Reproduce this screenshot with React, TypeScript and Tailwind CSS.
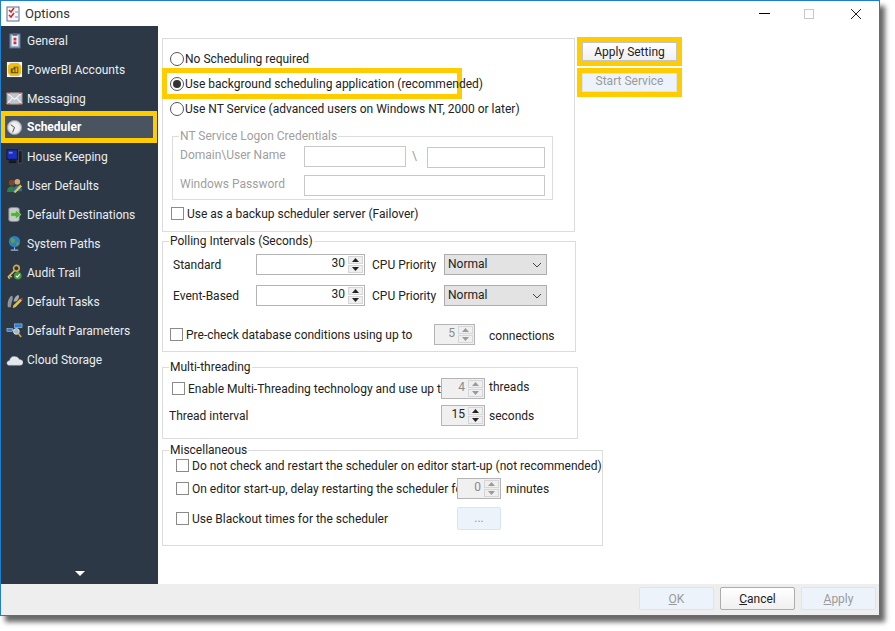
import type { ReactNode } from "react";

const icons: Record<string, ReactNode> = {
  General: (
    <>
      <rect x="4" y="2" width="11" height="15" fill="#8fa6c4" stroke="#4c6488" />
      <rect x="6" y="3" width="7" height="12" fill="#e8edf4" />
      <rect x="7" y="1" width="5" height="3" fill="#55657a" />
      <path d="M8 6h3v3H8zM8 10h3v3H8z" fill="#c8333a" />
    </>
  ),
  PowerBI: (
    <>
      <rect x="1" y="1" width="16" height="16" fill="#f4f4f4" />
      <path d="M5 2h8l3 3v8l-3 3H5l-3-3V5z" fill="#eebc12" />
      <path d="M5 8h3V6h5v7H5z" fill="#5f4d0a" />
      <path d="M7 9h2v3H7zM10 7h2v5h-2z" fill="#e2b414" />
    </>
  ),
  Messaging: (
    <>
      <path d="M1 3l16 0v12H1z" fill="#c2c6cc" stroke="#8d8f93" />
      <path d="M1 3l8 7 8-7M1 15l6-7M17 15l-6-7" fill="none" stroke="#f2f3f5" strokeWidth="1.2" />
      <path d="M1 3h3M14 3h3M1 15h3M14 15h3" stroke="#b8433b" strokeWidth="1.6" />
    </>
  ),
  Scheduler: (
    <>
      <circle cx="9" cy="9" r="7.5" fill="#d9dadc" stroke="#9a9da1" />
      <circle cx="9" cy="9" r="5.5" fill="#f0f0f0" />
      <path d="M9 9L5 6M9 9l-2 5" stroke="#3c3f44" strokeWidth="1" fill="none" />
    </>
  ),
  House: (
    <>
      <rect x="1" y="2" width="11" height="10" fill="#1b2fc4" stroke="#14181f" />
      <rect x="3" y="4" width="4" height="2" fill="#6d84f0" />
      <rect x="3" y="13" width="8" height="3" fill="#14181f" />
      <rect x="13" y="3" width="4" height="13" fill="#1b1d22" stroke="#5b5f66" strokeWidth="0.6" />
    </>
  ),
  User: (
    <>
      <circle cx="6" cy="6" r="3" fill="#7a4a28" />
      <path d="M1 16c0-4 2-6 5-6s5 2 5 6z" fill="#2f7d4a" />
      <circle cx="12" cy="5" r="3" fill="#d9a870" />
      <path d="M8 15c0-4 2-6 4-6s5 2 5 6z" fill="#2e6aa8" />
      <path d="M8 16l7-8 2 2-7 7z" fill="#e6c52f" />
    </>
  ),
  Destinations: (
    <>
      <path d="M3 3c0-2 11-2 11 0v12c0 2-11 2-11 0z" fill="#c8cbce" stroke="#81868c" />
      <path d="M5 7h5V4l6 5-6 5v-3H5z" fill="#4fb337" stroke="#e2f3dc" strokeWidth="0.5" />
    </>
  ),
  Paths: (
    <>
      <circle cx="9" cy="7" r="6" fill="#2f7ec4" />
      <path d="M5 3l4 1 1 3-3 2-2-2zM11 8l3 0-1 3-2 1z" fill="#5d9f4a" />
      <path d="M9 13v3M5 16h8" stroke="#8fb4d8" strokeWidth="1.2" />
    </>
  ),
  Audit: (
    <>
      <circle cx="11" cy="4.5" r="3" fill="none" stroke="#d3a94a" strokeWidth="1.7" />
      <path d="M9 7l-7 7M4 12l2 2M2.5 14l1.5 1.5" stroke="#e2bd64" strokeWidth="1.6" fill="none" />
      <circle cx="12.5" cy="12.5" r="4" fill="#4a9a3e" />
      <path d="M10.5 12.5l1.5 1.5 2.5-3" stroke="#fff" strokeWidth="1.1" fill="none" />
    </>
  ),
  Tasks: (
    <>
      <path d="M2 15c-1-4 1-11 4-12 2 0 1 5 0 7l-1 5z" fill="#8f959c" />
      <path d="M8 9c0-3 3-7 5-7 2 1 0 5-2 7z" fill="#a4a9af" />
      <path d="M7 16l1-3 7-7 2 2-7 7z" fill="#e5c23e" />
      <path d="M15 6l2 2 1-2-1-1z" fill="#c8333a" />
    </>
  ),
  Parameters: (
    <>
      <rect x="9" y="2" width="8" height="4" fill="#2f80d2" stroke="#cfe2f6" strokeWidth="0.5" />
      <rect x="1" y="7" width="6" height="3" fill="#2f80d2" stroke="#cfe2f6" strokeWidth="0.5" />
      <path d="M7 8.500h3" stroke="#cfe2f6" />
      <circle cx="11" cy="10" r="3" fill="#9fb5c8" stroke="#dfe5ea" />
      <path d="M13 12l3 4" stroke="#c9a24c" strokeWidth="1.8" />
    </>
  ),
  Cloud: (
    <path
      d="M1 13c0-2 2-3 3-3 0-3 3-5 6-4 2 0 3 1 4 3 2 0 4 1 4 3s-1 3-3 3H3c-1 0-2-1-2-2z"
      fill="#e4e8ec"
      stroke="#b8bfc6"
      strokeWidth="0.5"
    />
  ),
};

const navItems = [
  { label: "General", icon: "General" },
  { label: "PowerBI Accounts", icon: "PowerBI" },
  { label: "Messaging", icon: "Messaging" },
  { label: "Scheduler", icon: "Scheduler", active: true },
  { label: "House Keeping", icon: "House" },
  { label: "User Defaults", icon: "User" },
  { label: "Default Destinations", icon: "Destinations" },
  { label: "System Paths", icon: "Paths" },
  { label: "Audit Trail", icon: "Audit" },
  { label: "Default Tasks", icon: "Tasks" },
  { label: "Default Parameters", icon: "Parameters" },
  { label: "Cloud Storage", icon: "Cloud" },
];

function NavIcon({ name }: { name: string }) {
  return (
    <svg width="17" height="17" viewBox="0 0 18 18" className="shrink-0">
      {icons[name]}
    </svg>
  );
}

function Sidebar() {
  return (
    <div className="w-[157px] shrink-0 bg-[#2c3845] flex flex-col text-[#e9edf2]">
      {navItems.map((item) =>
        item.active ? (
          <div
            key={item.label}
            className="h-[32px] w-[156px] -mt-[2px] -mb-[1px] border-x-4 border-y-[5px] border-[#ffcc00] bg-[#4a5461] flex items-center gap-[4px] pl-[1px] font-bold text-white"
          >
            <NavIcon name={item.icon} />
            {item.label}
          </div>
        ) : (
          <div key={item.label} className="h-[29px] flex items-center gap-[4px] pl-[5px]">
            <NavIcon name={item.icon} />
            {item.label}
          </div>
        )
      )}
      <div className="mt-auto mb-[8px] ml-[74px] w-0 h-0 border-x-[5px] border-x-transparent border-t-[5px] border-t-white" />
    </div>
  );
}

function Radio({ checked }: { checked?: boolean }) {
  return (
    <span className="w-[14px] h-[14px] shrink-0 rounded-full border border-[#555] bg-white flex items-center justify-center">
      {checked && <span className="w-[8px] h-[8px] rounded-full bg-[#333]" />}
    </span>
  );
}

function Check() {
  return <span className="w-[13px] h-[13px] shrink-0 border border-[#8a8a8a] bg-white" />;
}

function Spin({ value, width, disabled, shaded }: { value: number; width: string; disabled?: boolean; shaded?: boolean }) {
  const arrow = disabled ? "#9a9a9a" : "#222";
  return (
    <div
      className={`${width} h-[21px] shrink-0 border border-[#b4b4b4] flex items-center justify-end pr-[1px] ${
        disabled || shaded ? "bg-[#f0f0f0]" : "bg-white"
      } ${disabled ? "text-[#8a8a8a]" : "text-[#222]"}`}
    >
      <span className="mr-[3px] -mt-[3px]">{value}</span>
      <div className="w-[15px] h-[17px] flex flex-col gap-[1px]">
        <div className="flex-1 bg-[#efefef] border border-[#d6d6d6] flex items-center justify-center">
          <svg width="7" height="4" viewBox="0 0 7 4">
            <path d="M3.500 0L7 4H0z" fill={arrow} />
          </svg>
        </div>
        <div className="flex-1 bg-[#efefef] border border-[#d6d6d6] flex items-center justify-center">
          <svg width="7" height="4" viewBox="0 0 7 4">
            <path d="M0 0h7L3.500 4z" fill={arrow} />
          </svg>
        </div>
      </div>
    </div>
  );
}

function Input({ className }: { className: string }) {
  return <div className={`h-[21px] shrink-0 border border-[#c8c8c8] bg-white ${className}`} />;
}

function Select() {
  return (
    <div className="w-[103px] h-[21px] shrink-0 border border-[#adadad] bg-[#e3e3e3] flex items-center justify-between pl-[3px] pr-[4px]">
      <span className="-mt-[2px]">Normal</span>
      <svg width="10" height="6" viewBox="0 0 10 6" fill="none" stroke="#444">
        <path d="M1 1l4 4 4-4" />
      </svg>
    </div>
  );
}

function Group({ title, className, children }: { title: string; className: string; children: ReactNode }) {
  return (
    <fieldset className={`border border-[#dcdcdc] ${className}`}>
      <legend className="ml-[6px] px-[1px] leading-[14px]">{title}</legend>
      {children}
    </fieldset>
  );
}

function Highlight({ className, children }: { className: string; children: ReactNode }) {
  return <div className={`border-[5px] border-[#ffcc00] ${className}`}>{children}</div>;
}

function WinButton({ label, hot, disabled, className }: { label: string; hot?: string; disabled?: boolean; className?: string }) {
  return (
    <div
      className={`w-[75px] h-[23px] rounded-[2px] border flex items-center justify-center ${
        disabled
          ? "border-[#d9e5f2] bg-[#edf3fb] text-[#9a9a9a]"
          : "border-[#adadad] bg-gradient-to-b from-white to-[#f0f0f0] text-[#222]"
      } ${className ?? ""}`}
    >
      <span>
        <span className="underline">{hot}</span>
        {label}
      </span>
    </div>
  );
}

export default function App() {
  return (
    <div className="w-[895px] h-[631px] bg-white overflow-hidden font-['Roboto',sans-serif] text-[12px] text-[#222] whitespace-nowrap">
      <div className="w-[880px] h-[616px] border border-[#1b7fd4] bg-white flex flex-col shadow-[5px_6px_5px_rgba(0,0,0,0.6)]">
        <div className="h-[25px] shrink-0 flex items-center pl-[5px]">
          <svg width="14" height="16" viewBox="0 0 14 16" className="mt-[1px]">
            <rect x="1" y="1" width="12" height="14" fill="#f7f7f7" stroke="#5a6f92" />
            <path d="M3 4l2 2 3-4M3 9l2 2 3-4" fill="none" stroke="#d2262c" strokeWidth="1.5" />
            <path d="M9 6h3M9 11h3" stroke="#7a8aa5" />
          </svg>
          <span className="ml-[5px] text-[13px] text-[#333]">Options</span>
          <div className="ml-auto flex items-center">
            <span className="w-[11px] h-[1px] bg-black mr-[34px]" />
            <span className="w-[10px] h-[10px] border border-[#c8c8c8] mr-[36px]" />
            <svg width="12" height="12" viewBox="0 0 12 12" className="mr-[17px]" stroke="#222" fill="none">
              <path d="M1 1l10 10M11 1L1 11" />
            </svg>
          </div>
        </div>

        <div className="flex-1 flex min-h-0">
          <Sidebar />
          <div className="flex-1 flex pl-[4px] pt-[12px] min-w-0">
            <div className="w-[416px] shrink-0 flex flex-col">
              <div className="w-[413px] h-[194px] shrink-0 border border-[#dcdcdc]">
                <div className="flex items-center gap-[1px] mt-[13px] ml-[7px] h-[14px]">
                  <Radio />
                  No Scheduling required
                </div>
                <Highlight className="mt-[2px] -ml-[1px] w-[300px] h-[31px] bg-white flex items-center gap-[1px] pl-[3px]">
                  <Radio checked />
                  Use background scheduling application (recommended)
                </Highlight>
                <div className="flex items-center gap-[1px] mt-[3px] ml-[7px] h-[14px]">
                  <Radio />
                  Use NT Service (advanced users on Windows NT, 2000 or later)
                </div>
                <fieldset className="mt-[13px] ml-[9px] w-[381px] h-[71px] border border-[#dcdcdc] text-[#a0a0a0]">
                  <legend className="ml-[6px] px-[1px] leading-[14px]">NT Service Logon Credentials</legend>
                  <div className="flex items-start mt-[3px] ml-[7px]">
                    <span className="w-[124px] leading-[19px]">Domain\User Name</span>
                    <Input className="w-[102px]" />
                    <span className="w-[21px] pl-[6px] leading-[21px]">\</span>
                    <Input className="w-[118px] mt-[1px]" />
                  </div>
                  <div className="flex items-center mt-[7px] ml-[7px]">
                    <span className="w-[124px] -mt-[3px]">Windows Password</span>
                    <Input className="w-[241px]" />
                  </div>
                </fieldset>
                <div className="flex items-center gap-[3px] mt-[7px] ml-[8px] h-[13px]">
                  <Check />
                  Use as a backup scheduler server (Failover)
                </div>
              </div>

              <Group title="Polling Intervals (Seconds)" className="w-[414px] h-[118px] mt-[2px] shrink-0">
                <div className="flex items-center mt-[6px] h-[21px]">
                  <span className="w-[93px] pl-[10px]">Standard</span>
                  <Spin value={30} width="w-[109px]" />
                  <span className="w-[79px] pl-[7px]">CPU Priority</span>
                  <Select />
                </div>
                <div className="flex items-center mt-[10px] h-[21px]">
                  <span className="w-[93px] pl-[10px]">Event-Based</span>
                  <Spin value={30} width="w-[109px]" />
                  <span className="w-[79px] pl-[7px]">CPU Priority</span>
                  <Select />
                </div>
                <div className="flex items-center mt-[18px] h-[21px] pl-[7px]">
                  <Check />
                  <span className="w-[251px] pl-[3px]">Pre-check database conditions using up to</span>
                  <Spin value={5} width="w-[41px]" disabled />
                  <span className="ml-[14px] mt-[3px]">connections</span>
                </div>
              </Group>

              <Group title="Multi-threading" className="w-[416px] h-[79px] mt-[8px] shrink-0">
                <div className="flex items-center mt-[4px] h-[21px] pl-[9px]">
                  <Check />
                  <span className="w-[256px] pl-[3px]">Enable Multi-Threading technology and use up to</span>
                  <Spin value={4} width="w-[44px]" disabled />
                  <span className="ml-[4px] -mt-[3px]">threads</span>
                </div>
                <div className="flex items-center mt-[6px] h-[21px] pl-[6px]">
                  <span className="w-[272px]">Thread interval</span>
                  <Spin value={15} width="w-[44px]" shaded />
                  <span className="ml-[4px]">seconds</span>
                </div>
              </Group>

              <Group title="Miscellaneous" className="w-[416px] h-[103px] mt-[4px] shrink-0">
                <div className="flex items-center gap-[3px] mt-[2px] h-[13px] ml-[13px] ">
                  <Check />
                  Do not check and restart the scheduler on editor start-up (not recommended)
                </div>
                <div className="flex items-center mt-[6px] h-[21px] pl-[13px]">
                  <Check />
                  <span className="w-[268px] pl-[3px]">On editor start-up, delay restarting the scheduler for</span>
                  <Spin value={0} width="w-[44px]" disabled />
                  <span className="ml-[5px]">minutes</span>
                </div>
                <div className="flex items-center mt-[8px] h-[23px] pl-[13px]">
                  <Check />
                  <span className="w-[268px] pl-[3px]">Use Blackout times for the scheduler</span>
                  <div className="w-[44px] h-[23px] rounded-[2px] border border-[#d9e5f2] bg-[#edf3fb] text-[#9a9a9a] text-center leading-[21px]">
                    ...
                  </div>
                </div>
              </Group>
            </div>

            <div className="flex flex-col gap-[2px] -mt-[1px] -ml-[1px]">
              <Highlight className="w-[105px] h-[29px]">
                <div className="h-full border border-[#c4c4c4] bg-gradient-to-b from-white to-[#f0f0f0] flex items-center justify-center">
                  Apply Setting
                </div>
              </Highlight>
              <Highlight className="w-[105px] h-[29px]">
                <div className="h-full border border-[#d9e5f2] bg-[#edf3fb] text-[#9a9a9a] flex items-center justify-center pb-[3px]">
                  Start Service
                </div>
              </Highlight>
            </div>
          </div>
        </div>

        <div className="h-[31px] shrink-0 bg-[#eeeeee] flex justify-end gap-[6px] pr-[3px] pt-[3px]">
          <WinButton hot="O" label="K" disabled />
          <WinButton hot="C" label="ancel" />
          <WinButton hot="A" label="pply" disabled />
        </div>
      </div>
    </div>
  );
}
